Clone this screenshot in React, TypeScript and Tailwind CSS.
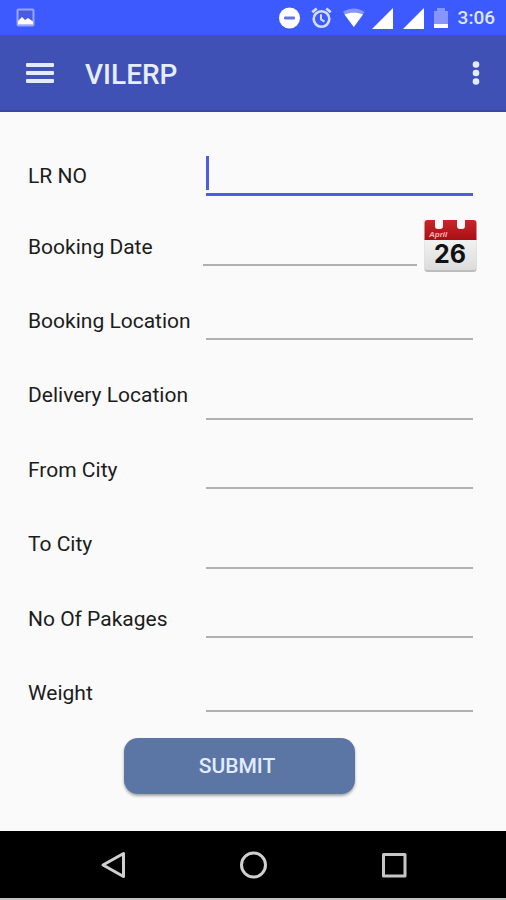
import React from 'react';

interface Field {
  id: string;
  label: string;
  row: string;
  input: string;
  focused?: boolean;
  date?: boolean;
}

const line = 'h-11 border-b-2 border-[#b0b0b0]';
const tallLine = 'h-[50px] border-b-2 border-[#b0b0b0]';

const fields: Field[] = [
  { id: 'lrNo', label: 'LR NO', row: 'h-[71px] pr-[33px]', input: 'h-[45px] border-b-[3px] border-[#4f5be0]', focused: true },
  { id: 'bookingDate', label: 'Booking Date', row: 'h-[74px] pr-[29px]', input: line, date: true },
  { id: 'bookingLocation', label: 'Booking Location', row: 'h-[74px] pr-[33px]', input: line },
  { id: 'deliveryLocation', label: 'Delivery Location', row: 'h-[75px] pr-[33px]', input: tallLine },
  { id: 'fromCity', label: 'From City', row: 'h-[74px] pr-[33px]', input: line },
  { id: 'toCity', label: 'To City', row: 'h-[75px] pr-[33px]', input: tallLine },
  { id: 'packages', label: 'No Of Pakages', row: 'h-[74px] pr-[33px]', input: line },
  { id: 'weight', label: 'Weight', row: 'h-[70px] pr-[33px]', input: line },
];

function SignalIcon() {
  return (
    <svg width="25" height="22" viewBox="0 0 25 22" fill="#fff" aria-hidden="true">
      <path d="M0 22 21 1v21z" />
    </svg>
  );
}

function StatusBar() {
  return (
    <div className="flex h-[35px] items-center justify-between bg-[#3d5afe] pr-[11px] pl-4">
      <svg width="20" height="20" viewBox="0 0 20 20" aria-hidden="true">
        <rect x="1.5" y="1.5" width="16" height="16" rx="1" fill="#4a5be0" stroke="#94a6ff" strokeWidth="2" />
        <path d="M2 16.500V13l4-4 3 3 3-2 5 3.500v3z" fill="#fff" />
      </svg>
      <div className="flex items-center gap-1.5">
        <svg width="26" height="22" viewBox="0 0 26 22" aria-hidden="true">
          <circle cx="10.500" cy="11" r="10.500" fill="#fff" />
          <rect x="5" y="9.500" width="11" height="3" rx="1" fill="#6474e6" />
        </svg>
        <svg width="26" height="22" viewBox="0 0 26 22" fill="none" stroke="#d3deff" strokeWidth="2.600" aria-hidden="true">
          <circle cx="10.500" cy="12" r="7.800" />
          <path d="M1.300 5.200 5.700 1.500M19.700 5.200 15.300 1.500" strokeWidth="2.800" />
          <path d="M10 7.200v5.200l3.500 2.300" strokeWidth="2" />
        </svg>
        <svg width="23" height="22" viewBox="0 0 23 22" aria-hidden="true">
          <path d="M0 5C6 .3 15.500.3 21.500 5L10.800 20z" fill="#8796ff" />
          <path d="M1.500 7.500C7 5 14.500 5 20 7.500L10.800 20z" fill="#fff" />
        </svg>
        <SignalIcon />
        <SignalIcon />
        <svg width="18" height="22" viewBox="0 0 18 22" aria-hidden="true">
          <path d="M0 4h3V1h8v3h3v14H0z" fill="#8795ff" />
          <path d="M0 17h14v4H0z" fill="#fff" />
        </svg>
        <span className="text-[19px] leading-6 font-medium text-[#dfe6ff]">3:06</span>
      </div>
    </div>
  );
}

function AppBar() {
  return (
    <header className="flex h-[77px] items-center border-b-2 border-[#3848a8] bg-[#3f51b5] pr-4 pl-6">
      <button type="button" aria-label="Menu" className="flex h-8 w-8 items-center justify-center">
        <svg width="28" height="22" viewBox="0 0 28 22" fill="#e3ebff">
          <rect y="1" width="28" height="4" rx="1" />
          <rect y="9" width="28" height="4" rx="1" />
          <rect y="17" width="28" height="4" rx="1" />
        </svg>
      </button>
      <h1 className="ml-[29px] flex-1 pt-1 text-[28px] leading-8 font-medium text-[#e6edff]">VILERP</h1>
      <button type="button" aria-label="More options" className="flex h-8 w-7 items-center justify-center">
        <svg width="8" height="26" viewBox="0 0 8 26" fill="#e3ebff">
          <circle cx="4" cy="4.500" r="3.300" />
          <circle cx="4" cy="13" r="3.300" />
          <circle cx="4" cy="21.500" r="3.300" />
        </svg>
      </button>
    </header>
  );
}

function CalendarIcon() {
  return (
    <svg width="53" height="54" viewBox="0 0 53 54">
      <defs>
        <linearGradient id="page" x1="0" y1="0" x2="0" y2="1">
          <stop offset="0" stopColor="#f4f4f4" />
          <stop offset="1" stopColor="#dcdcdc" />
        </linearGradient>
        <linearGradient id="top" x1="0" y1="0" x2="0" y2="1">
          <stop offset="0" stopColor="#c8262a" />
          <stop offset="1" stopColor="#a80f14" />
        </linearGradient>
      </defs>
      <rect x="0.500" y="19" width="52" height="35" rx="3" fill="#bdbdbd" />
      <path d="M0.500 18h52v31a3 3 0 0 1-3 3h-46a3 3 0 0 1-3-3z" fill="url(#page)" />
      <path d="M3.500 2h46a3 3 0 0 1 3 3v17h-52V5a3 3 0 0 1 3-3z" fill="url(#top)" />
      <path d="M11 0h8v8a3 3 0 0 1-3 3h-2a3 3 0 0 1-3-3zM33 0h8v8a3 3 0 0 1-3 3h-2a3 3 0 0 1-3-3z" fill="#fafafa" />
      <text x="5" y="19" fontFamily="Liberation Sans, sans-serif" fontSize="8" fontWeight="700" fontStyle="italic" fill="#f3b8b8">
        April
      </text>
      <text x="26" y="45" textAnchor="middle" fontFamily="Inter, sans-serif" fontSize="25" fontWeight="700" fill="#111">
        26
      </text>
    </svg>
  );
}

function FieldRow({ field }: { field: Field }) {
  return (
    <div className={`flex items-start pl-7 ${field.row}`}>
      <label
        htmlFor={field.id}
        className={`flex h-[50px] shrink-0 items-center text-[21px] leading-7 whitespace-nowrap text-[#1c1c1c] ${field.date ? 'w-[175px]' : 'w-[178px]'}`}
      >
        {field.label}
      </label>
      <div className="relative min-w-0 flex-1">
        <input
          id={field.id}
          type="text"
          className={`block w-full bg-transparent px-1 text-[21px] outline-none ${field.input}`}
        />
        {field.focused && <span className="absolute top-[5px] left-0 h-[34px] w-[3px] bg-[#4f5be0]" />}
      </div>
      {field.date && (
        <button type="button" aria-label="Pick booking date" className="-mt-1 ml-[7px] shrink-0">
          <CalendarIcon />
        </button>
      )}
    </div>
  );
}

function NavBar() {
  return (
    <nav className="flex h-[69px] items-center justify-center gap-28 border-b-2 border-[#c4c4c4] bg-black">
      <button type="button" aria-label="Back">
        <svg width="28" height="28" viewBox="0 0 28 28" fill="none" stroke="#d0d0d0" strokeWidth="3" strokeLinejoin="round">
          <path d="M4 14 24.500 2.500v23z" />
        </svg>
      </button>
      <button type="button" aria-label="Home">
        <svg width="28" height="28" viewBox="0 0 28 28" fill="none" stroke="#d0d0d0" strokeWidth="3">
          <circle cx="14.500" cy="14" r="12" />
        </svg>
      </button>
      <button type="button" aria-label="Recent apps">
        <svg width="28" height="28" viewBox="0 0 28 28" fill="none" stroke="#c6c6c6" strokeWidth="3" strokeLinejoin="round">
          <rect x="4.500" y="3.500" width="21.500" height="21.500" />
        </svg>
      </button>
    </nav>
  );
}

export default function App() {
  return (
    <div className="flex min-h-screen flex-col bg-[#fafafa] font-['Roboto',sans-serif]">
      <StatusBar />
      <AppBar />
      <main className="flex-1 pt-[39px]">
        <form onSubmit={(e) => e.preventDefault()}>
          {fields.map((field) => (
            <FieldRow key={field.id} field={field} />
          ))}
          <div className="flex justify-center pr-7">
            <button
              type="submit"
              className="h-14 w-[231px] rounded-[14px] bg-[#5b76a5] pt-0.5 pr-1 text-[21px] font-medium text-[#e3ecff] shadow-[0_2px_3px_rgba(0,0,0,0.35)]"
            >
              SUBMIT
            </button>
          </div>
        </form>
      </main>
      <NavBar />
    </div>
  );
}
